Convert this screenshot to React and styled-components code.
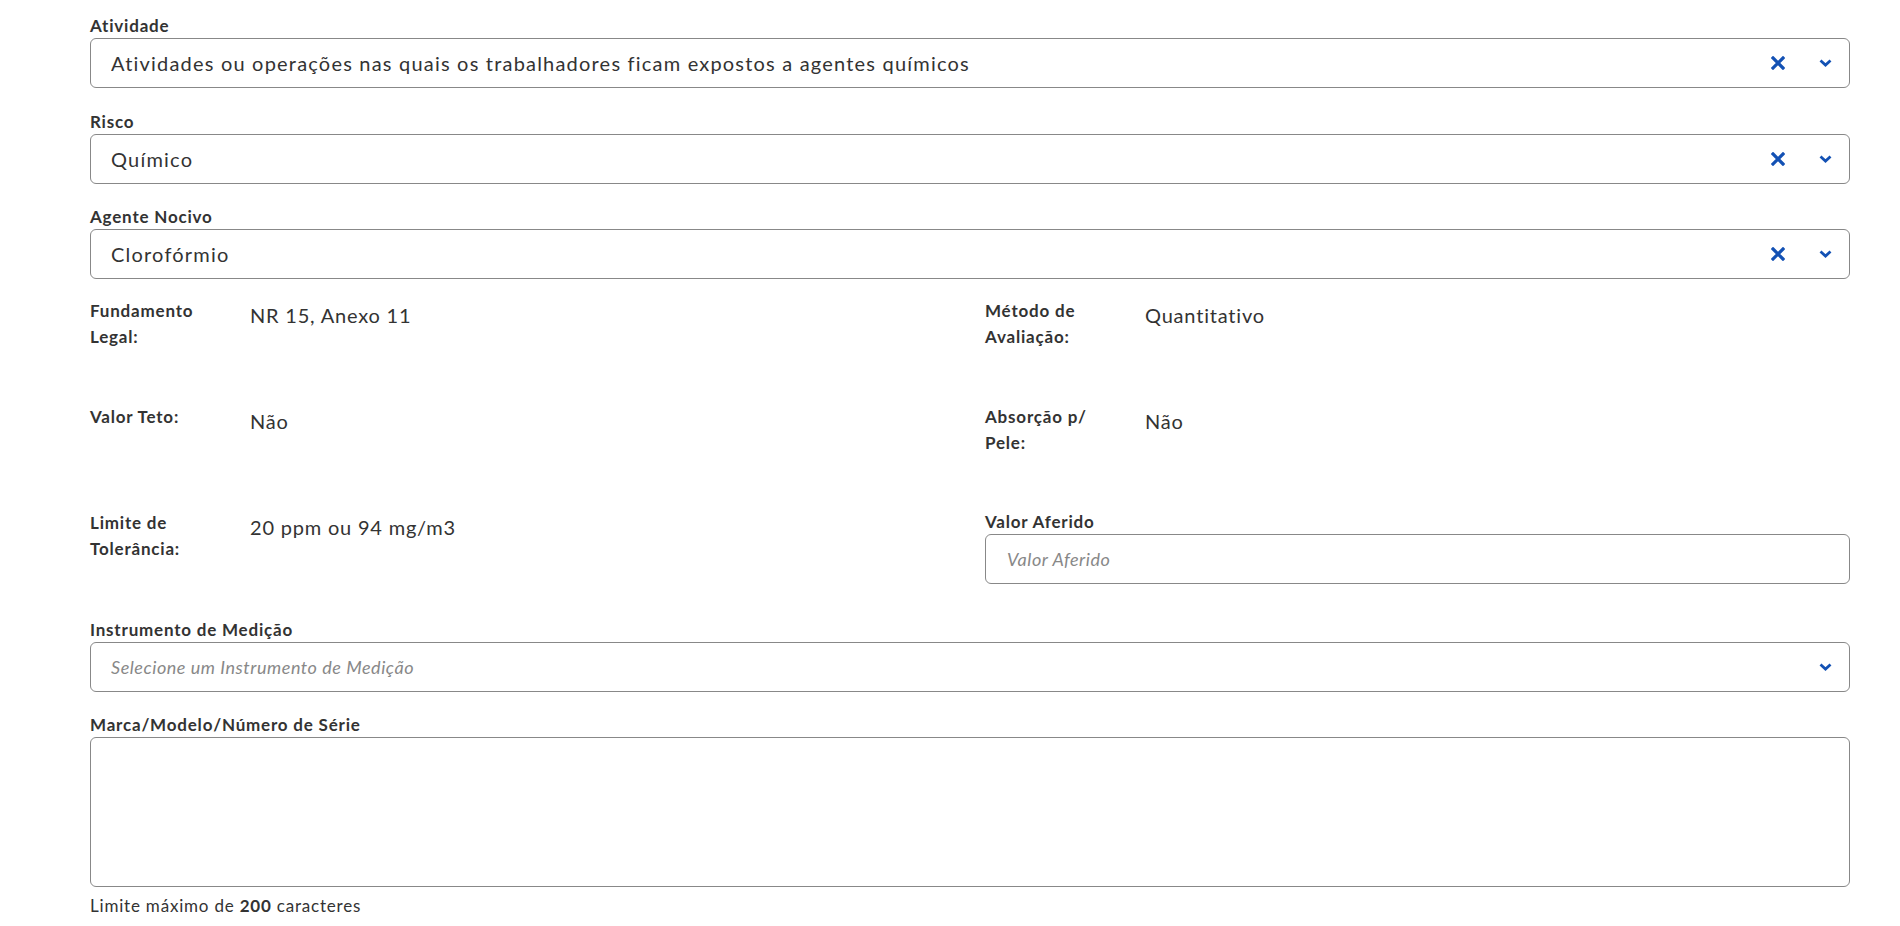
import React from "react";
import styled, { createGlobalStyle } from "styled-components";

const GlobalStyle = createGlobalStyle`
  body {
    margin: 0;
    background: #ffffff;
    font-family: Lato, "Open Sans", sans-serif;
    letter-spacing: 0.05em;
    color: #333333;
  }
`;

const BLUE = "#1351b4";

const Page = styled.div`
  padding: 14px 50px 20px 90px;
  display: flex;
  flex-direction: column;
`;

const Field = styled.div`
  display: flex;
  flex-direction: column;
  margin-bottom: ${(p) => p.$mb ?? 22}px;
`;

const Label = styled.label`
  font-size: 17px;
  line-height: 24px;
  font-weight: 700;
  color: #333333;
`;

const Select = styled.div`
  display: flex;
  align-items: center;
  height: 50px;
  box-sizing: border-box;
  border: 1px solid #888888;
  border-radius: 6px;
  padding: 0 17px 0 20px;
  background: #ffffff;
`;

const SelectText = styled.span`
  flex: 1;
  font-size: ${(p) => (p.$placeholder ? 18 : 20)}px;
  font-style: ${(p) => (p.$placeholder ? "italic" : "normal")};
  letter-spacing: ${(p) => (p.$placeholder ? "0.03em" : "0.06em")};
  color: ${(p) => (p.$placeholder ? "#888888" : "#333333")};
  white-space: nowrap;
  overflow: hidden;
`;

const IconButton = styled.span`
  display: flex;
  align-items: center;
  justify-content: center;
  margin-left: ${(p) => p.$ml ?? 0}px;
  color: ${BLUE};
`;

const Input = styled.div`
  height: 50px;
  box-sizing: border-box;
  border: 1px solid #888888;
  border-radius: 6px;
  padding: 0 21px;
  display: flex;
  align-items: center;
  font-size: 18px;
  font-style: italic;
  letter-spacing: 0.03em;
  color: #888888;
`;

const TextArea = styled.div`
  height: 150px;
  box-sizing: border-box;
  border: 1px solid #888888;
  border-radius: 6px;
`;

const Details = styled.div`
  display: grid;
  grid-template-columns: 1fr 1fr;
  column-gap: 30px;
  row-gap: 20px;
  grid-auto-rows: minmax(86px, auto);
  margin-bottom: 22px;
`;

const Detail = styled.div`
  display: grid;
  grid-template-columns: 125px 1fr;
  column-gap: 35px;
  align-items: start;
`;

const DetailLabel = styled.div`
  font-size: 17px;
  line-height: 26px;
  font-weight: 700;
  color: #333333;
`;

const DetailValue = styled.div`
  font-size: 20px;
  line-height: 26px;
  padding-top: 4px;
  color: #333333;
`;

const Help = styled.div`
  margin-top: 7px;
  font-size: 17px;
  line-height: 24px;
  color: #333333;

  strong {
    font-weight: 700;
  }
`;

const Times = () => (
  <svg width="14" height="14" viewBox="0 0 14 14">
    <path d="M2 2 L12 12 M12 2 L2 12" stroke="currentColor" strokeWidth="3.2" strokeLinecap="square" />
  </svg>
);

const AngleDown = () => (
  <svg width="13" height="8" viewBox="0 0 13 8">
    <path d="M1.5 1.5 L6.5 6 L11.5 1.5" stroke="currentColor" strokeWidth="2.8" fill="none" />
  </svg>
);

function SelectField({ label, value, placeholder, clearable = true, mb }) {
  return (
    <Field $mb={mb}>
      <Label>{label}</Label>
      <Select>
        <SelectText $placeholder={!value}>{value || placeholder}</SelectText>
        {clearable && (
          <IconButton>
            <Times />
          </IconButton>
        )}
        <IconButton $ml={34}>
          <AngleDown />
        </IconButton>
      </Select>
    </Field>
  );
}

function DetailItem({ label, value }) {
  return (
    <Detail>
      <DetailLabel>{label}</DetailLabel>
      <DetailValue>{value}</DetailValue>
    </Detail>
  );
}

export default function App() {
  return (
    <Page>
      <GlobalStyle />
      <SelectField
        label="Atividade"
        value="Atividades ou operações nas quais os trabalhadores ficam expostos a agentes químicos"
      />
      <SelectField label="Risco" value="Químico" mb={21} />
      <SelectField label="Agente Nocivo" value="Clorofórmio" mb={19} />

      <Details>
        <DetailItem label="Fundamento Legal:" value="NR 15, Anexo 11" />
        <DetailItem label="Método de Avaliação:" value="Quantitativo" />
        <DetailItem label="Valor Teto:" value="Não" />
        <DetailItem label="Absorção p/ Pele:" value="Não" />
        <DetailItem label="Limite de Tolerância:" value="20 ppm ou 94 mg/m3" />
        <Field $mb={0}>
          <Label>Valor Aferido</Label>
          <Input>Valor Aferido</Input>
        </Field>
      </Details>

      <SelectField
        label="Instrumento de Medição"
        placeholder="Selecione um Instrumento de Medição"
        clearable={false}
        mb={21}
      />

      <Field $mb={0}>
        <Label>Marca/Modelo/Número de Série</Label>
        <TextArea />
      </Field>
      <Help>
        Limite máximo de <strong>200</strong> caracteres
      </Help>
    </Page>
  );
}
